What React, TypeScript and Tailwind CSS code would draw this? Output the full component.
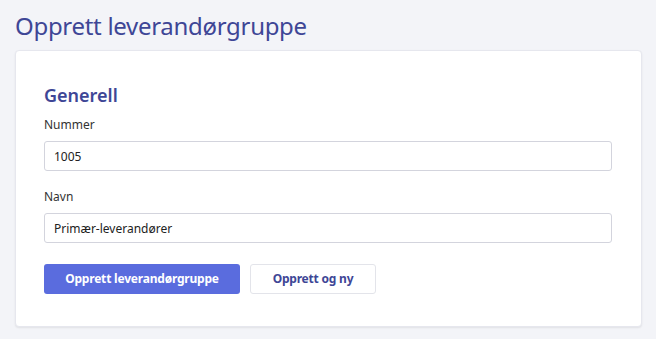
import React from "react";

export default function App() {
  return (
    <div className="min-h-[339px] w-[656px] bg-[#f3f4f8] pl-[15px] pr-[14px] pt-[8px] pb-[12px]" style={{ fontFamily: '"Noto Sans", "Open Sans", sans-serif' }}>
      <h1 className="text-[24px] leading-[36px] font-normal text-[#3e4696] tracking-[-0.3px]">Opprett leverandørgruppe</h1>
      <div className="mt-[6px] w-[627px] h-[277px] rounded-[4px] bg-white border border-[#e6e7ee] shadow-[0_1px_2px_rgba(0,0,0,0.08)] pl-[28px] pr-[29px] pt-[32px]">
        <h2 className="text-[18px] leading-[24px] font-semibold text-[#3e4696]">Generell</h2>
        <div className="mt-[10px]">
          <label className="block text-[12px] leading-[16px] text-[#333]">Nummer</label>
          <input
            readOnly
            value="1005"
            className="mt-[8px] block w-full h-[30px] rounded-[3px] border border-[#d3d4dd] px-[9px] text-[12px] text-[#222] outline-none"
          />
        </div>
        <div className="mt-[18px]">
          <label className="block text-[12px] leading-[16px] text-[#333]">Navn</label>
          <input
            readOnly
            value="Primær-leverandører"
            className="mt-[8px] block w-full h-[30px] rounded-[3px] border border-[#d3d4dd] px-[9px] text-[12px] text-[#222] outline-none"
          />
        </div>
        <div className="mt-[21px] flex gap-[10px]">
          <button className="w-[196px] h-[30px] rounded-[3px] bg-[#5a6cde] text-white text-[12px] font-bold tracking-[-0.2px]">Opprett leverandørgruppe</button>
          <button className="w-[126px] h-[30px] rounded-[3px] bg-white border border-[#e3e4ea] text-[#3e4696] text-[12px] font-bold tracking-[-0.2px]">Opprett og ny</button>
        </div>
      </div>
    </div>
  );
}
